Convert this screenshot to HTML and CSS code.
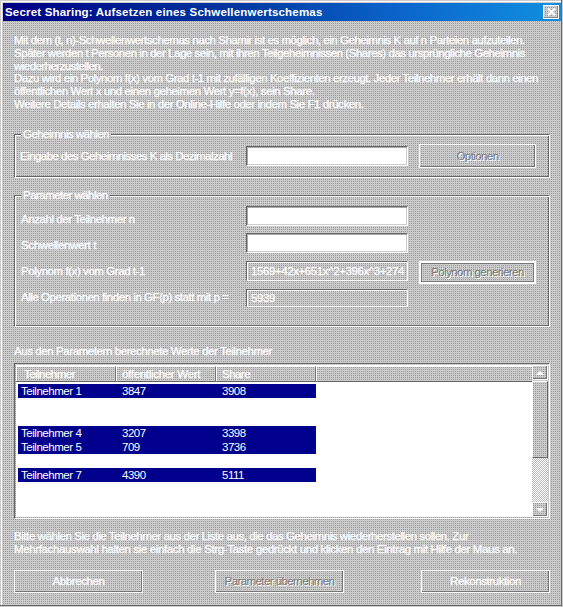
FILE: index.html
```html
<!DOCTYPE html>
<html lang="de">
<head>
<meta charset="utf-8">
<title>Secret Sharing</title>
<link rel="stylesheet" href="styles.css">
</head>
<body>
<main class="window">
  <header class="titlebar">
    <h1>Secret Sharing: Aufsetzen eines Schwellenwertschemas</h1>
    <button class="close" aria-label="Schließen"><svg width="9" height="8" viewBox="0 0 9 8"><path d="M1 .5 8 7.5M8 .5 1 7.5" stroke="#fff" stroke-width="2"/></svg></button>
  </header>

  <div class="intro">
    <p>Mit dem (t, n)-Schwellenwertschemas nach Shamir ist es möglich, ein Geheimnis K auf n Parteien aufzuteilen.</p>
    <p>Später werden t Personen in der Lage sein, mit ihren Teilgeheimnissen (Shares) das ursprüngliche Geheimnis</p>
    <p class="tight">wiederherzustellen.</p>
    <p>Dazu wird ein Polynom f(x) vom Grad t-1 mit zufälligen Koeffizienten erzeugt. Jeder Teilnehmer erhält dann einen</p>
    <p class="loose">öffentlichen Wert x und einen geheimen Wert y=f(x), sein Share.</p>
    <p class="medium">Weitere Details erhalten Sie in der Online-Hilfe oder indem Sie F1 drücken.</p>
  </div>

  <section class="group secret">
    <h2 class="legend tight">Geheimnis wählen</h2>
    <div class="row">
      <label class="tight">Eingabe des Geheimnisses K als Dezimalzahl</label>
      <div class="field"></div>
      <button class="btn disabled">Optionen</button>
    </div>
  </section>

  <section class="group params">
    <h2 class="legend tight">Parameter wählen</h2>
    <div class="row r1"><label class="medium">Anzahl der Teilnehmer n</label><div class="field"></div></div>
    <div class="row r2"><label class="looser">Schwellenwert t</label><div class="field"></div></div>
    <div class="row r3"><label class="medium">Polynom f(x) vom Grad t-1</label><div class="field readonly">1569+42x+651x^2+396x^3+274</div><button class="btn disabled default">Polynom generieren</button></div>
    <div class="row r4"><label>Alle Operationen finden in GF(p) statt mit p =</label><div class="field readonly">5939</div></div>
  </section>

  <p class="caption">Aus den Parametern berechnete Werte der Teilnehmer</p>
  <section class="list">
    <div class="table">
      <div class="thead"><span class="tight">Teilnehmer</span><span class="wide">öffentlicher Wert</span><span class="tight">Share</span><span></span></div>
      <div class="tbody">
        <div class="item sel"><span>Teilnehmer 1</span><span>3847</span><span>3908</span></div>
        <div class="item"></div>
        <div class="item"></div>
        <div class="item sel"><span>Teilnehmer 4</span><span>3207</span><span>3398</span></div>
        <div class="item sel"><span>Teilnehmer 5</span><span>709</span><span>3736</span></div>
        <div class="item"></div>
        <div class="item sel"><span>Teilnehmer 7</span><span>4390</span><span>5111</span></div>
      </div>
    </div>
    <div class="scroll">
      <div class="arrow"><svg width="8" height="4" viewBox="0 0 8 4"><path d="M4 0 8 4H0z" fill="#fff"/></svg></div>
      <div class="thumb"></div>
      <div class="track"></div>
      <div class="arrow"><svg width="8" height="4" viewBox="0 0 8 4"><path d="M0 0h8L4 4z" fill="#fff"/></svg></div>
    </div>
  </section>

  <div class="hint">
    <p class="medium">Bitte wählen Sie die Teilnehmer aus der Liste aus, die das Geheimnis wiederherstellen sollen. Zur</p>
    <p class="looser">Mehrfachauswahl halten sie einfach die Strg-Taste gedrückt und klicken den Eintrag mit Hilfe der Maus an.</p>
  </div>
  <footer class="actions">
    <button class="btn loose">Abbrechen</button>
    <button class="btn disabled">Parameter übernehmen</button>
    <button class="btn loose last">Rekonstruktion</button>
  </footer>
</main>
</body>
</html>
```
FILE: styles.css
```css
* { box-sizing: border-box; margin: 0; padding: 0; }

/* 2x2 dither: one darker pixel in four */
:root {
  --dither-columns: linear-gradient(90deg, #ccc 1px, transparent 1px);
  --dither-rows: linear-gradient(#ccc 1px, #999 1px);
}

body {
  width: 563px;
  height: 607px;
  overflow: hidden;
  background: #ccc;
  color: #fff;
  font: 11.5px/13px "Liberation Sans", Arial, sans-serif;
  letter-spacing: -.46px;
}

.window {
  width: 562px;
  height: 606px;
  padding: 1px 1px 0 2px;
  overflow: hidden;
  background: var(--dither-columns) 0 0 / 2px 2px, var(--dither-rows) 0 0 / 2px 2px;
  box-shadow: inset -1px -1px #666, inset 0 1px #ccc, inset 1px 0 #ccc, inset 2px 2px #fff;
}

p, label, h2, .btn, .thead span, .item span { white-space: nowrap; }
p, label, .legend, .thead, .readonly, .btn.loose { -webkit-text-stroke: .25px #fff; }
.tight { letter-spacing: -.54px; }
.medium { letter-spacing: -.435px; }
.loose { letter-spacing: -.41px; }
.looser { letter-spacing: -.37px; }
.wide { letter-spacing: -.31px; }

.titlebar {
  display: flex;
  align-items: center;
  justify-content: space-between;
  height: 18px;
  margin: 2px 0 0 1px;
  padding: 0 2px;
  background: linear-gradient(90deg, #000084, #0038a0 42%, #0c66cc 72%, #1090e0);
}
.titlebar h1 { font-size: 11.5px; font-weight: bold; letter-spacing: .19px; white-space: nowrap; }
.close {
  display: grid;
  place-items: center;
  width: 16px;
  height: 14px;
  border: 1px solid #fff;
  background: var(--dither-columns) 0 0 / 2px 2px, var(--dither-rows) 0 0 / 2px 2px;
  box-shadow: inset -1px -1px #888;
}

.intro { height: 100px; padding: 13px 0 0 12px; line-height: 12.8px; }

.group {
  width: 536px;
  margin-left: 12px;
  border: 1px solid;
  border-color: #666 #fff #fff #666;
  box-shadow: inset 1px 1px #fff, inset -1px -1px #666;
}
.secret { height: 44px; margin-top: 13px; }
.params { height: 132px; margin-top: 17px; }
.legend {
  width: max-content;
  height: 13px;
  margin: -7px 0 0 6px;
  padding: 0 2px;
  font-size: 11.5px;
  font-weight: normal;
  background: var(--dither-columns) 1px 0 / 2px 2px, var(--dither-rows) 0 0 / 2px 2px;
}
.secret .legend { background-position: 1px 0, 0 0; }
.params .legend { background-position: 1px 1px, 0 1px; }

.row { display: grid; grid-template-columns: 226px 162px 117px; padding-left: 5px; }
.row .btn { margin-left: 11px; width: 117px; }
.row label { align-self: center; }
.secret .row { align-items: center; margin-top: 3px; height: 24px; }
.params label { padding-left: 1px; }
.r1 { margin-top: 4px; height: 20px; }
.r1 label { padding-top: 7px; }
.r2 { margin-top: 7px; height: 20px; }
.r2 label { padding-top: 4px; }
.r3 { margin-top: 8px; height: 20px; }
.r3 label { padding-bottom: 2px; }
.r4 { margin-top: 8px; height: 18px; }
.r4 label { padding-bottom: 1px; }

.field {
  height: 20px;
  padding: 3px 0 0 4px;
  border: 1px solid;
  border-color: #666 #fff #fff #666;
  background: #fff;
  box-shadow: inset 1px 1px #aaa, inset -1px -1px #ccc;
  letter-spacing: -.41px;
  white-space: nowrap;
}
.readonly { background: none; box-shadow: inset 1px 1px #fff; }
.r4 .field { height: 18px; padding-top: 2px; }

.btn {
  height: 24px;
  border: 1px solid #fff;
  background: none;
  box-shadow: inset -1px -1px #777;
  color: #fff;
  font: inherit;
  letter-spacing: -.46px;
}
.btn.loose { letter-spacing: -.41px; }
.btn.disabled { color: #777; text-shadow: 1px 1px #fff; letter-spacing: -.58px; }
.btn.default { height: 23px; border-width: 2px; box-shadow: inset -1px -1px #777, inset 1px 1px #777; }

.caption { margin: 18px 0 0 12px; height: 13px; letter-spacing: -.42px; }
.list {
  display: flex;
  width: 536px;
  height: 156px;
  margin: 5px 0 0 12px;
  padding: 1px;
  border: 1px solid;
  border-color: #666 #fff #fff #666;
}
.table { display: flex; flex-direction: column; flex: 1; }
.thead {
  display: grid;
  grid-template-columns: 100px 100px 100px 1fr;
  height: 17px;
  border-top: 1px solid #fff;
  border-bottom: 1px solid #666;
}
.thead span {
  padding: 1px 0 0 7px;
  border-left: 1px solid #fff;
  border-top: 1px solid #fff;
  border-right: 1px solid #777;
  line-height: 12px;
}
.thead span:nth-child(2), .thead span:nth-child(3) { padding-left: 5px; }
.thead span:last-child { border-right: 0; }
.tbody { flex: 1; padding: 2px 0 0 2px; background: #fff; }
.item { display: grid; grid-template-columns: 101px 100px 97px; width: 298px; height: 14px; padding-left: 3px; line-height: 14px; }
.item.sel { background: #00008c; }

.scroll { display: flex; flex-direction: column; width: 16px; }
.arrow { display: grid; place-items: center; height: 15px; border: 1px solid #fff; box-shadow: inset -1px -1px #777; }
.thumb { height: 77px; margin-top: 1px; border: 1px solid #fff; border-right-color: #666; border-bottom-color: #666; }
.track { flex: 1; background: repeating-conic-gradient(#bbb 0 25%, #fff 0 50%) 0 0 / 2px 2px; }

.hint { height: 51px; padding: 11px 0 0 12px; }
.actions { display: flex; width: 536px; margin-left: 12px; gap: 72px; }
.actions .btn { flex: none; width: 129px; height: 23px; }
.actions .last { margin-left: auto; }
```
